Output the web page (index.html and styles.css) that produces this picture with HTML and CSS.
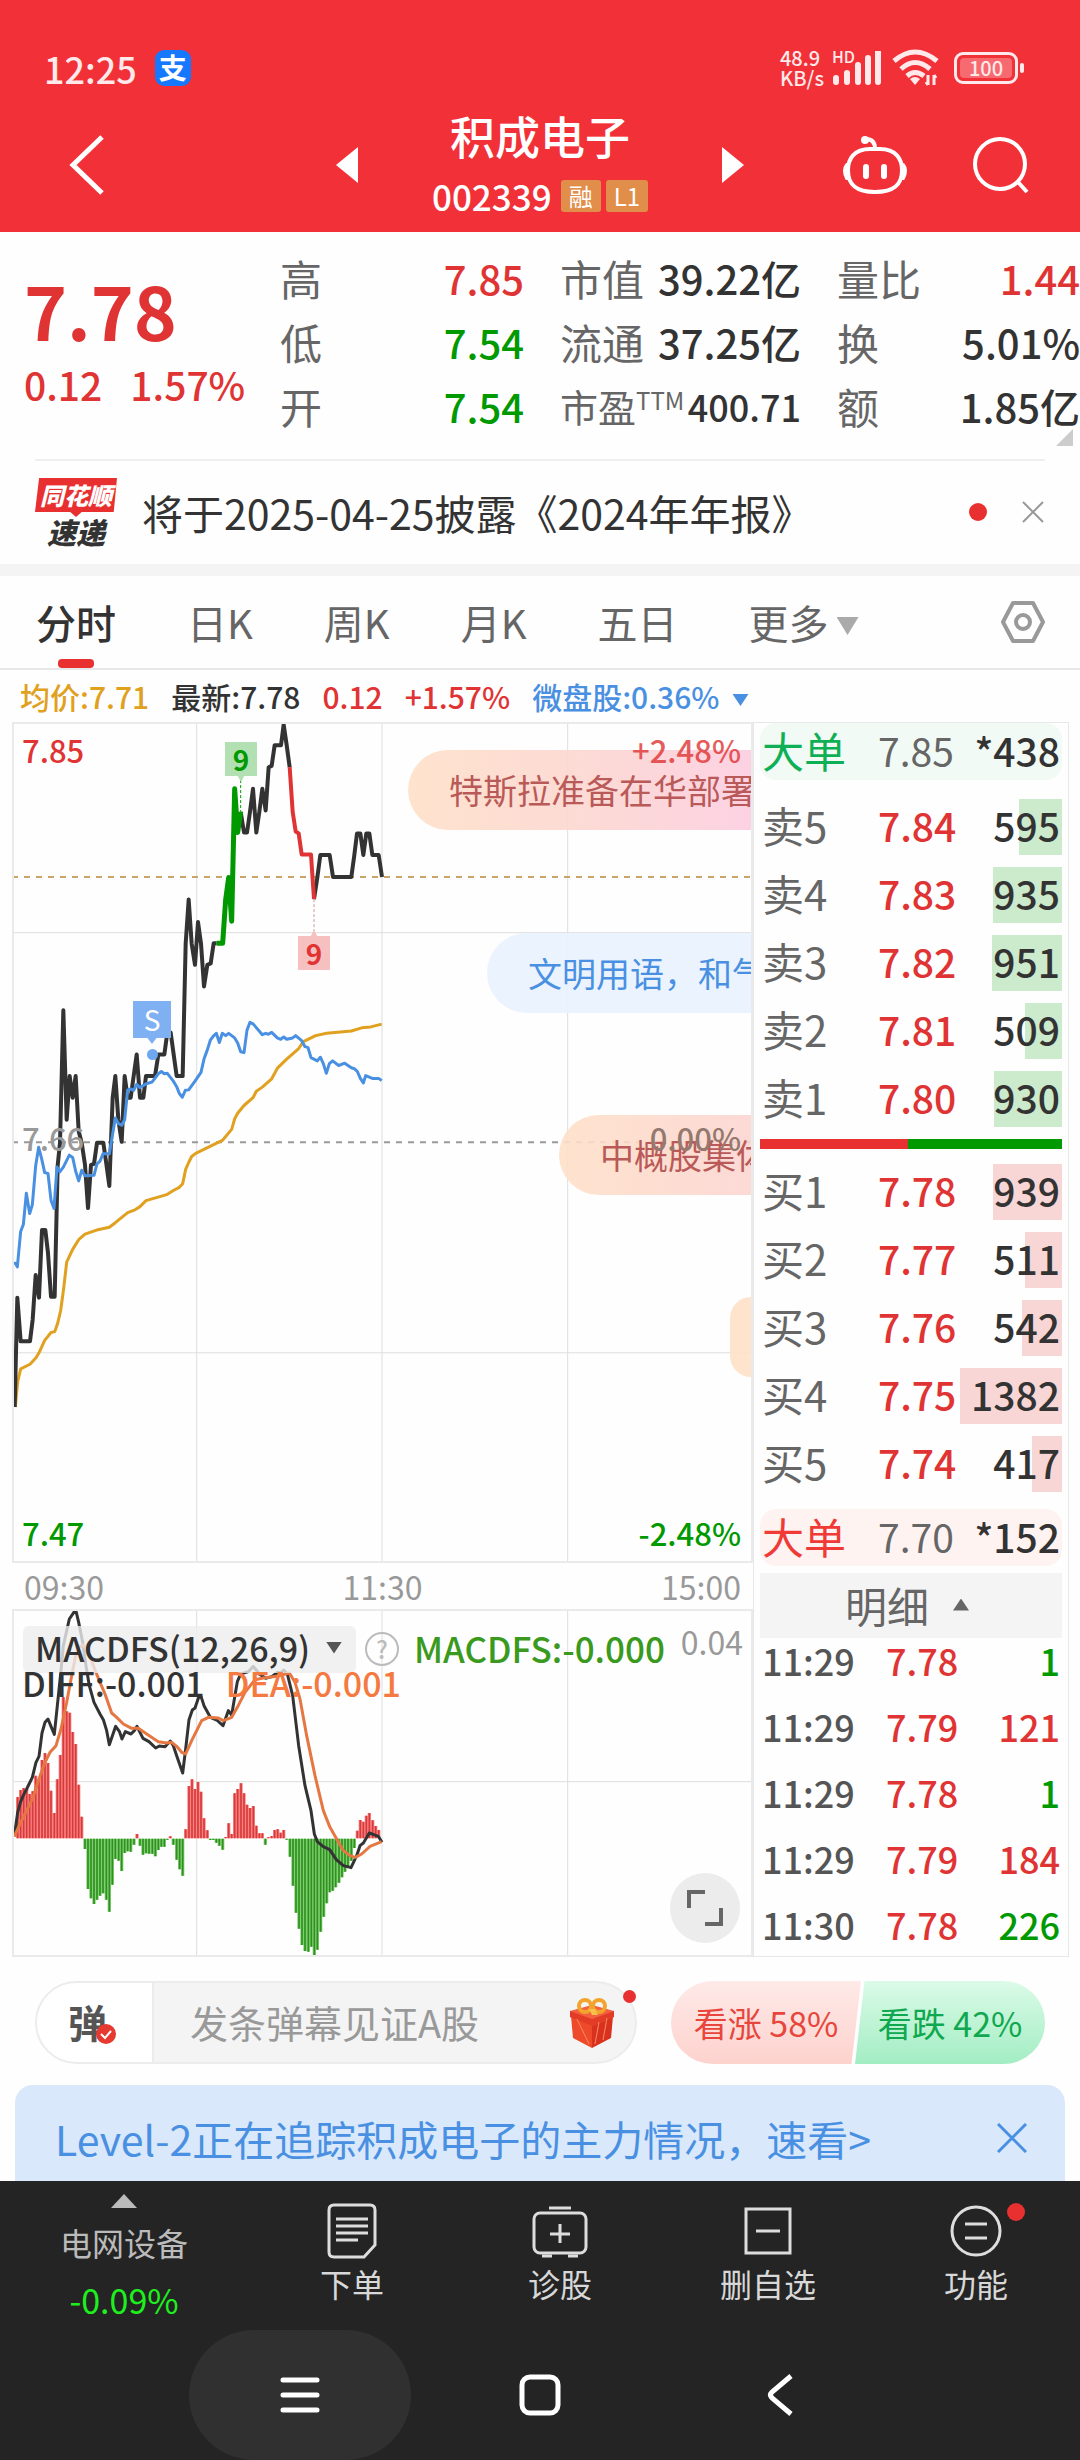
FILE: index.html
```html
<!DOCTYPE html>
<html lang="zh-CN">
<head>
<meta charset="utf-8">
<meta name="viewport" content="width=device-width">
<title>积成电子 002339</title>
<link rel="stylesheet" href="styles.css">
</head>
<body>
<header class="top">
  <div class="status">
    <span class="clock">12:25</span>
    <span class="pay">支</span>
    <span class="speed"><span>48.9</span><span>KB/s</span></span>
    <span class="signal">
      <span class="hd">HD</span>
      <svg viewBox="0 0 50 34" width="50" height="34" aria-hidden="true"><path d="M4 33v-4M15 33V24M26 33V16M36 33V9M46 33V3" stroke="#ffe9ea" stroke-width="6" stroke-linecap="round" transform="translate(0 -2)"/></svg>
    </span>
    <svg class="wifi" viewBox="0 0 48 38" width="48" height="38" aria-hidden="true"><g fill="none" stroke="#ffe9ea" stroke-width="5"><path d="M2 12Q23-6 45 12"/><path d="M9 20Q23 7 38 20"/><path d="M15 27Q23 20 32 27"/></g><path d="M18 30Q23 26 28 30L23 36Z" fill="#ffe9ea"/><path d="M36 26v10M34 33l2 3M42 36V26M44 29l-2-3" stroke="#ffe9ea" stroke-width="3" fill="none"/></svg>
    <span class="battery"><span class="cell">100</span></span>
  </div>
  <nav class="nav">
    <button class="icon-btn back" aria-label="返回"><svg viewBox="0 0 36 62" width="36" height="62"><path d="M33 3L4 31L33 59" fill="none" stroke="#fff" stroke-width="5"/></svg></button>
    <div class="stock">
      <button class="icon-btn" aria-label="上一只"><svg viewBox="0 0 22 36" width="22" height="36"><path d="M22 0V36L0 18Z" fill="#fff"/></svg></button>
      <div class="name">
        <h1>积成电子</h1>
        <p class="code"><span>002339</span><span class="tag">融</span><span class="tag">L1</span></p>
      </div>
      <button class="icon-btn" aria-label="下一只"><svg viewBox="0 0 22 36" width="22" height="36"><path d="M0 0V36L22 18Z" fill="#fff"/></svg></button>
    </div>
    <div class="actions">
      <button class="icon-btn" aria-label="问财助手"><svg viewBox="0 0 66 60" width="66" height="60"><g fill="none" stroke="#fff" stroke-width="4" stroke-linecap="round"><path d="M33 14H38C54 14 60 24 60 35C60 50 52 57 33 57C14 57 6 50 6 35C6 24 12 14 28 14H33C33 7 30 4 24 4"/><path d="M5 30Q1 35 5 43M61 30Q65 35 61 43"/><path d="M24 32v9M42 32v9" stroke-width="6"/></g><circle cx="23" cy="5" r="4" fill="#fff"/></svg></button>
      <button class="icon-btn" aria-label="搜索"><svg viewBox="0 0 58 58" width="58" height="58"><circle cx="28" cy="28" r="25" fill="none" stroke="#fff" stroke-width="4"/><path d="M45 45L55 56" stroke="#fff" stroke-width="4"/></svg></button>
    </div>
  </nav>
</header>

<main>
  <section class="quote">
    <div class="last red">
      <strong>7.78</strong>
      <p><span>0.12</span><span>1.57%</span></p>
    </div>
    <dl class="col c1">
      <div><dt>高</dt><dd class="red">7.85</dd></div>
      <div><dt>低</dt><dd class="green">7.54</dd></div>
      <div><dt>开</dt><dd class="green">7.54</dd></div>
    </dl>
    <dl class="col c2">
      <div><dt>市值</dt><dd>39.22亿</dd></div>
      <div><dt>流通</dt><dd>37.25亿</dd></div>
      <div><dt class="pe">市盈<sup>TTM</sup></dt><dd class="small">400.71</dd></div>
    </dl>
    <dl class="col c3">
      <div><dt>量比</dt><dd class="red">1.44</dd></div>
      <div><dt>换</dt><dd>5.01%</dd></div>
      <div><dt>额</dt><dd>1.85亿</dd></div>
    </dl>
    <span class="corner"></span>
  </section>

  <section class="news">
    <span class="brand"><span class="brand-box">同花顺</span><span class="brand-sub">速递</span></span>
    <a href="#news">将于2025-04-25披露《2024年年报》</a>
    <span class="dot"></span>
    <button class="icon-btn" aria-label="关闭"><svg viewBox="0 0 24 24" width="24" height="24"><path d="M2 2L22 22M22 2L2 22" stroke="#999" stroke-width="2"/></svg></button>
  </section>

  <nav class="tabs">
    <button class="on">分时</button>
    <button>日K</button>
    <button>周K</button>
    <button>月K</button>
    <button>五日</button>
    <button>更多<i class="tri-down"></i></button>
    <button class="set" aria-label="设置"><svg viewBox="0 0 46 44" width="46" height="44"><path d="M13 3H33L43 22L33 41H13L3 22Z" fill="none" stroke="#999" stroke-width="4" stroke-linejoin="round"/><circle cx="23" cy="22" r="7" fill="none" stroke="#999" stroke-width="4"/></svg></button>
  </nav>

  <div class="info">
    <span class="avg">均价:7.71</span>
    <span>最新:7.78</span>
    <span class="red">0.12</span>
    <span class="red">+1.57%</span>
    <span class="blue index">微盘股:0.36%<i class="tri-down"></i></span>
  </div>

  <div class="board">
    <div class="charts">
      <figure class="price">
        <svg class="plot" viewBox="42 9 2211 1821" preserveAspectRatio="none" aria-hidden="true">
          <g class="grid">
            <path d="M590 5V1834M1146 5V1834M1703 5V1834M36 463H2259M36 1377H2259"/>
          </g>
          <path class="dash gold" d="M36 342H2259"/>
          <path class="dash grey" d="M36 919H2259"/>
          <polyline class="line avg-line" points="46,1495 53,1440 62,1412 90,1402 108,1388 117,1377 134,1350 153,1333 164,1331 173,1313 182,1285 191,1237 200,1180 218,1152 236,1131 255,1119 290,1110 328,1104 346,1094 383,1072 405,1066 420,1059 438,1046 500,1033 520,1024 538,1017 548,1009 557,978 566,963 575,950 587,943 667,915 695,891 704,868 713,856 732,839 759,822 769,808 787,799 815,781 833,757 860,738 896,715 910,700 947,687 980,682 1054,677 1085,670 1112,668 1145,662"/>
          <polyline class="line last-line" points="44,1495 52,1257 62,1352 90,1352 98,1305 107,1208 117,1257 126,1110 136,1110 144,1160 153,1255 164,1255 173,970 180,920 190,632 200,870 209,775 218,822 227,775 236,895 245,920 255,968 264,1062 273,968 282,966 291,920 310,920 319,966 328,1014 338,822 346,775 355,870 365,918 374,775 383,822 392,822 401,775 410,728 420,822 430,822 438,775 465,775 475,728 493,728 502,680 512,680 521,728 530,775 548,775 557,487 566,391 575,487 585,533 594,440 603,487 612,580 622,533 632,530 641,486 650,486"/>
          <polyline class="line last-line" points="722,200 732,245 741,245 750,200 759,150 769,245 778,200 787,150 797,197 806,103 815,100 824,55 843,55 851,10 860,55 869,103"/>
          <polyline class="line last-line" points="942,390 952,343 961,294 989,294 999,342 1054,342 1063,294 1071,247 1081,247 1090,294 1099,247 1108,247 1117,294 1136,294 1146,342"/>
          <polyline class="line up-line" points="650,486 668,486 677,391 686,343 695,438 704,150 713,245 722,200"/>
          <polyline class="line down-line" points="869,103 878,200 887,243 896,247 905,293 933,293 942,390"/>
          <polyline class="line index-line" points="40,1182 46,1182 52,1190 62,1113 70,1098 79,1030 89,1074 97,1055 107,970 116,930 125,955 134,985 144,987 153,1045 162,1063 171,973 180,983 190,973 208,947 218,952 227,982 236,1003 245,980 255,992 282,991 291,966 300,960 309,944 328,944 337,905 346,866 355,878 365,882 374,870 383,805 392,803 401,806 410,793 420,800 438,792 456,788 475,770 484,765 493,770 502,769 520,786 530,798 538,813 547,821 556,806 566,805 585,786 603,767 612,738 622,718 631,697 640,688 649,682 658,702 667,682 677,687 686,682 704,692 713,703 722,722 732,724 741,675 750,658 760,662 787,685 797,682 805,684 815,680 832,692 842,695 851,690 860,695 878,692 887,687 905,698 915,711 924,713 933,735 952,742 961,734 970,748 979,769 988,748 998,742 1016,752 1034,747 1054,757 1063,759 1072,765 1081,780 1090,790 1097,774 1117,780 1136,780 1145,785"/>
          <path class="lead" stroke="#090" d="M722 131V200"/>
          <path class="lead" stroke="#c99" d="M942 390V460"/>
        </svg>
        <span class="mark sell">9</span>
        <span class="mark buy">9</span>
        <span class="mark s">S</span>
        <span class="barrage b1">特斯拉准备在华部署</span>
        <span class="barrage b2">文明用语，和气</span>
        <span class="barrage b3">中概股集体</span>
        <span class="barrage b4"></span>
        <span class="scale tl red">7.85</span>
        <span class="scale tr red">+2.48%</span>
        <span class="scale ml">7.66</span>
        <span class="scale mr">0.00%</span>
        <span class="scale bl green">7.47</span>
        <span class="scale br green">-2.48%</span>
      </figure>
      <div class="times"><span>09:30</span><span>11:30</span><span>15:00</span></div>
      <figure class="macd">
        <svg class="plot" viewBox="42 156 2211 1032" preserveAspectRatio="none" aria-hidden="true">
          <path class="grid" d="M590 150V1189M1146 150V1189M1703 150V1189M36 668H2259"/>
          <defs>
            <path id="up" d="M53 838V714M62 838V693M71 838V687M80 838V690M89 838V705M98 838V697M107 838V650M117 838V661M126 838V603M135 838V582M144 838V612M153 838V695M163 838V762M172 838V661M181 838V588M190 838V414M200 838V457M209 838V461M218 838V519M227 838V555M236 838V677M245 838V773M411 838V825M511 838V832M557 838V811M567 838V681M576 838V661M585 838V690M594 838V669M603 838V698M612 838V778M622 838V814M677 838V834M686 838V793M695 838V825M704 838V703M713 838V690M723 838V673M732 838V703M741 838V737M750 838V747M760 838V741M769 838V800M778 838V823M787 838V823M805 838V835M815 838V831M824 838V813M833 838V811M842 838V821M851 838V813M1072 838V815M1081 838V783M1090 838V788M1099 838V770M1108 838V762M1118 838V784M1127 838V801M1136 838V813"/>
            <path id="down" d="M255 839V870M264 839V990M273 839V1018M282 839V1035M291 839V1022M300 839V1010M309 839V1003M319 839V1022M328 839V1058M337 839V977M346 839V900M356 839V905M365 839V936M374 839V882M383 839V877M392 839V878M402 839V857M420 839V860M429 839V887M438 839V883M447 839V884M457 839V884M466 839V892M475 839V873M484 839V863M493 839V863M502 839V842M520 839V857M530 839V902M539 839V931M548 839V950M631 839V843M640 839V843M649 839V851M658 839V860M668 839V872M796 839V857M860 839V842M870 839V893M879 839V980M888 839V1061M897 839V1109M906 839V1158M915 839V1176M925 839V1178M934 839V1163M943 839V1188M952 839V1172M962 839V1118M971 839V1073M980 839V1033M989 839V1000M998 839V995M1007 839V985M1017 839V971M1026 839V955M1035 839V938M1044 839V925M1054 839V905M1063 839V867"/>
          </defs>
          <use href="#up" stroke="#ff8080" stroke-width="10"/><use href="#up" stroke="#d23c3c" stroke-width="5"/>
          <use href="#down" stroke="#7fd06f" stroke-width="10"/><use href="#down" stroke="#2f8f20" stroke-width="5"/>
          <polyline class="line thin" stroke="#333" points="43,832 53,760 62,728 71,707 80,690 97,655 108,610 117,592 126,522 135,490 144,480 153,502 163,526 173,430 182,345 190,260 208,180 227,152 236,190 248,250 258,320 268,380 282,430 300,465 310,482 320,515 328,557 347,502 358,517 366,540 376,518 393,525 403,515 411,502 429,538 447,548 467,567 478,561 495,563 511,546 520,560 530,590 548,642 557,570 567,482 577,453 585,447 596,415 604,415 612,440 631,475 650,483 669,500 685,455 695,468 704,415 712,368 722,345 745,338 760,322 778,345 797,358 815,353 833,340 843,342 851,333 862,345 878,410 896,560 915,680 933,755 943,825 952,848 970,863 989,872 1009,902 1030,920 1053,926 1070,890 1080,860 1090,852 1108,822 1135,832 1146,850"/>
          <polyline class="line thin" stroke="#e57742" points="43,832 60,795 80,755 98,718 117,660 134,612 150,580 168,560 183,510 200,430 215,350 227,290 237,265 250,258 265,280 280,320 300,370 315,405 335,462 350,475 370,495 395,508 415,508 440,525 475,548 500,552 515,550 530,562 545,580 557,585 575,545 605,485 625,475 655,477 670,485 695,475 712,445 735,400 765,362 790,357 830,352 868,342 885,370 900,420 920,530 945,650 970,755 990,805 1010,840 1030,875 1050,890 1066,895 1085,885 1110,862 1145,848"/>
        </svg>
        <div class="legend">
          <button class="pick">MACDFS(12,26,9)<i class="tri-down"></i></button>
          <button class="help" aria-label="指标说明">?</button>
          <span class="macd-val">MACDFS:-0.000</span>
          <span class="max">0.04</span>
        </div>
        <div class="legend second"><span>DIFF:-0.001</span><span class="dea">DEA:-0.001</span></div>
        <button class="expand" aria-label="全屏"><svg viewBox="0 0 36 36" width="36" height="36"><path d="M2 18V2H18M34 18V34H18" fill="none" stroke="#666" stroke-width="4"/></svg></button>
      </figure>
    </div>

    <aside class="book">
      <table class="big up">
        <tr><th>大单</th><td>7.85</td><td class="vol">*438</td></tr>
      </table>
      <table class="levels asks">
        <tr><th>卖5</th><td class="red">7.84</td><td class="vol"><i style="width:43px"></i><b>595</b></td></tr>
        <tr><th>卖4</th><td class="red">7.83</td><td class="vol"><i style="width:69px"></i><b>935</b></td></tr>
        <tr><th>卖3</th><td class="red">7.82</td><td class="vol"><i style="width:70px"></i><b>951</b></td></tr>
        <tr><th>卖2</th><td class="red">7.81</td><td class="vol"><i style="width:37px"></i><b>509</b></td></tr>
        <tr><th>卖1</th><td class="red">7.80</td><td class="vol"><i style="width:68px"></i><b>930</b></td></tr>
      </table>
      <div class="ratio"><span style="width:49%"></span></div>
      <table class="levels bids">
        <tr><th>买1</th><td class="red">7.78</td><td class="vol"><i style="width:69px"></i><b>939</b></td></tr>
        <tr><th>买2</th><td class="red">7.77</td><td class="vol"><i style="width:37px"></i><b>511</b></td></tr>
        <tr><th>买3</th><td class="red">7.76</td><td class="vol"><i style="width:40px"></i><b>542</b></td></tr>
        <tr><th>买4</th><td class="red">7.75</td><td class="vol"><i style="width:102px"></i><b>1382</b></td></tr>
        <tr><th>买5</th><td class="red">7.74</td><td class="vol"><i style="width:30px"></i><b>417</b></td></tr>
      </table>
      <table class="big down">
        <tr><th>大单</th><td>7.70</td><td class="vol">*152</td></tr>
      </table>
      <button class="detail">明细<i class="tri-up"></i></button>
      <table class="trades">
        <tr><th>11:29</th><td class="red">7.78</td><td class="vol green">1</td></tr>
        <tr><th>11:29</th><td class="red">7.79</td><td class="vol red">121</td></tr>
        <tr><th>11:29</th><td class="red">7.78</td><td class="vol green">1</td></tr>
        <tr><th>11:29</th><td class="red">7.79</td><td class="vol red">184</td></tr>
        <tr><th>11:30</th><td class="red">7.78</td><td class="vol green">226</td></tr>
      </table>
    </aside>
  </div>

  <section class="social">
    <div class="comment">
      <button class="dan" aria-label="弹幕开关">弹<svg viewBox="0 0 22 22" width="22" height="22"><circle cx="11" cy="11" r="10" fill="#e6392f"/><path d="M6 11l4 4 6-7" fill="none" stroke="#fff" stroke-width="2"/></svg></button>
      <input type="text" aria-label="发弹幕" placeholder="发条弹幕见证A股">
      <svg class="gift" viewBox="0 0 46 50" width="46" height="50" aria-hidden="true"><path d="M2 18L23 26V50L4 40Z" fill="#ee4a2a"/><path d="M44 18L23 26V50L42 40Z" fill="#d8321f"/><path d="M1 13L23 7L45 13V19L23 28L1 19Z" fill="#f4603f"/><path d="M1 13L23 21L45 13V19L23 28L1 19Z" fill="#e23c26"/><path d="M8 21L20 46M30 24L26 46M38 20L34 42" stroke="#f98a5c" stroke-width="1"/><g fill="none" stroke="#f2a42c" stroke-width="4"><ellipse cx="16" cy="8" rx="6" ry="6"/><ellipse cx="30" cy="8" rx="6" ry="6"/></g><path d="M20 11h6l3 6h-6z" fill="#f7c04a"/></svg>
      <span class="dot small-dot"></span>
    </div>
    <div class="votes">
      <button class="bull">看涨 58%</button>
      <button class="bear">看跌 42%</button>
    </div>
  </section>

  <section class="banner">
    <a href="#level2">Level-2正在追踪积成电子的主力情况，速看&gt;</a>
    <button class="icon-btn" aria-label="关闭"><svg viewBox="0 0 30 30" width="30" height="30"><path d="M1 1L29 29M29 1L1 29" stroke="#4a90e2" stroke-width="3"/></svg></button>
  </section>
</main>

<footer class="bottom">
  <nav class="menu">
    <a class="sector" href="#sector"><i class="tri-up"></i><span>电网设备</span><span class="chg">-0.09%</span></a>
    <a href="#trade"><svg viewBox="0 0 56 56" width="56" height="56"><g fill="none" stroke="#ddd" stroke-width="3"><path d="M10 2H46Q51 2 51 7V42L40 54H10Q5 54 5 49V7Q5 2 10 2Z"/><path d="M12 16H44M12 23H44M12 30H44M12 37H34"/></g></svg><span>下单</span></a>
    <a href="#diagnose"><svg viewBox="0 0 56 56" width="56" height="56"><g fill="none" stroke="#ddd" stroke-width="3"><rect x="2" y="10" width="52" height="40" rx="6"/><path d="M17 5H39M28 21V40M18 31H38M10 53H20M36 53H46"/></g></svg><span>诊股</span></a>
    <a href="#remove"><svg viewBox="0 0 56 56" width="56" height="56"><g fill="none" stroke="#ddd" stroke-width="3"><rect x="6" y="6" width="44" height="44"/><path d="M16 28H40"/></g></svg><span>删自选</span></a>
    <a class="more" href="#tools"><svg viewBox="0 0 56 56" width="56" height="56"><g fill="none" stroke="#ddd" stroke-width="3"><circle cx="28" cy="28" r="24"/><path d="M17 21H39M17 35H39"/></g></svg><span>功能</span><b class="dot"></b></a>
  </nav>
  <div class="system">
    <button class="pressed" aria-label="最近任务"><svg viewBox="0 0 40 40" width="40" height="40"><path d="M3 5H37M3 20H37M3 35H37" stroke="#fff" stroke-width="5" stroke-linecap="round"/></svg></button>
    <button aria-label="主页"><svg viewBox="0 0 44 44" width="44" height="44"><rect x="4" y="4" width="36" height="36" rx="8" fill="none" stroke="#fff" stroke-width="5"/></svg></button>
    <button aria-label="返回"><svg viewBox="0 0 28 44" width="28" height="44"><path d="M25 3L6 19Q3 22 6 25L25 41" fill="none" stroke="#fff" stroke-width="5"/></svg></button>
  </div>
</footer>
</body>
</html>
```
FILE: styles.css
```css
* { box-sizing: border-box; }
body {
  margin: 0;
  background: #fefefe;
  color: #333;
  font-family: "Noto Sans CJK SC", "Noto Sans", sans-serif;
  font-size: 40px;
  line-height: 48px;
}
h1, p, dl, dd, figure { margin: 0; }
a { color: inherit; text-decoration: none; }
button { font: inherit; color: inherit; background: none; border: 0; padding: 0; }
svg { display: block; }
i, b { font-style: normal; font-weight: inherit; }
table { border-collapse: collapse; table-layout: fixed; width: 100%; }
th, td { padding: 0; font-weight: 400; text-align: left; }
.icon-btn { display: flex; }
.red { color: #e03434; }
.green { color: #090; }
.blue { color: #4a90e2; }
.dot { width: 18px; height: 18px; border-radius: 50%; background: #e93030; }
.tri-down, .tri-up { display: inline-block; width: 16px; height: 12px; background: currentColor; }
.tri-down { clip-path: polygon(0 0, 100% 0, 50% 100%); }
.tri-up { clip-path: polygon(50% 0, 100% 100%, 0 100%); }

/* header */
.top { background: #f23037; color: #fff; }
.status { display: flex; align-items: center; height: 100px; padding: 36px 56px 0 44px; color: #ffe9ea; }
.clock { font-size: 36px; font-weight: 500; }
.pay { width: 36px; height: 36px; margin: 0 auto 0 18px; border-radius: 9px; background: #1677ff; color: #fff; font-size: 28px; font-weight: 700; line-height: 34px; text-align: center; }
.speed { display: grid; font-size: 20px; line-height: 20px; font-weight: 500; margin-right: 8px; }
.signal { position: relative; }
.hd { position: absolute; left: 0; top: -3px; font-size: 16px; line-height: 16px; font-weight: 500; }
.wifi { margin: 0 14px 0 10px; }
.battery { position: relative; width: 64px; height: 32px; padding: 3px; border: 3px solid #ffe9ea; border-radius: 9px; margin-right: 6px; }
.battery::after { content: ""; position: absolute; right: -9px; top: 8px; width: 4px; height: 10px; border-radius: 2px; background: #ffe9ea; }
.cell { display: block; height: 20px; border-radius: 4px; background: #f76a70; font-size: 20px; line-height: 20px; font-weight: 500; text-align: center; }
.nav { display: grid; grid-template-columns: 1fr 408px 1fr; align-items: center; height: 132px; padding-bottom: 2px; }
.back { padding-left: 69px; }
.stock { display: flex; justify-content: space-between; align-items: center; }
.name { display: grid; justify-items: center; gap: 8px; padding-bottom: 2px; }
h1 { font-size: 45px; font-weight: 500; line-height: 56px; }
.code { display: flex; align-items: center; gap: 5px; font-size: 35px; line-height: 48px; font-weight: 500; }
.tag { height: 32px; padding: 0 8px; border-radius: 3px; background: #e28e4b; font-size: 24px; line-height: 31px; font-weight: 400; }
.tag:nth-child(2) { margin-left: 4px; }
.actions { display: flex; justify-content: flex-end; align-items: center; gap: 64px; padding-right: 50px; }

/* quote */
.quote { position: relative; display: grid; grid-template-columns: 280px 244px 277px 279px; padding-top: 14px; height: 227px; }
.last { padding-left: 24px; }
.last strong { display: block; margin-top: 18px; font-size: 73px; line-height: 90px; font-weight: 700; }
.last p { display: flex; gap: 28px; margin-top: 6px; font-size: 39px; font-weight: 500; }
.col { display: grid; grid-auto-rows: 64px; }
.col div { display: flex; justify-content: space-between; align-items: center; }
.c2, .c3 { padding-left: 36px; }
dt { font-size: 42px; color: #666; white-space: nowrap; }
dd { font-weight: 500; }
dt.pe { font-size: 38px; }
.pe sup { font-size: 24px; line-height: 0; vertical-align: 12px; }
.small { font-size: 36px; }
.corner { position: absolute; right: 7px; bottom: 13px; width: 17px; height: 17px; background: #ccc; clip-path: polygon(100% 0, 100% 100%, 0 100%); }

/* news */
.news { position: relative; display: flex; align-items: center; height: 117px; padding: 0 35px; border-bottom: 12px solid #f4f4f4; }
.news::before { content: ""; position: absolute; left: 35px; right: 35px; top: 0; height: 2px; background: #eee; }
.news a { flex: 1; margin-left: 25px; font-size: 41px; }
.news .icon-btn { margin-left: 34px; }
.brand { display: grid; width: 82px; justify-items: center; font-weight: 900; font-style: italic; }
.brand-box { width: 82px; height: 39px; padding-bottom: 5px; background: #e93030; color: #fff; font-size: 24px; line-height: 34px; text-align: center; clip-path: polygon(5% 0, 100% 0, 96% 87%, 57% 87%, 50% 100%, 43% 87%, 0 87%); }
.brand-sub { font-size: 29px; line-height: 28px; }

/* tabs */
.tabs { display: flex; align-items: center; gap: 71px; height: 94px; padding: 0 34px 0 36px; border-bottom: 2px solid #e8e8e8; color: #666; }
.tabs button { position: relative; white-space: nowrap; }
.tabs .on { color: #333; font-weight: 500; }
.tabs .on::after { content: ""; position: absolute; left: 22px; bottom: -22px; width: 36px; height: 9px; border-radius: 4px; background: #e93030; }
.tabs .tri-down { width: 22px; height: 18px; margin-left: 8px; vertical-align: 4px; color: #aaa; }
.tabs .set { margin-left: auto; }
.info { display: flex; align-items: center; gap: 22px; height: 52px; padding: 0 20px; font-size: 30px; font-weight: 500; }
.avg { color: #e0a020; }
.index .tri-down { margin-left: 13px; vertical-align: 3px; }

/* charts */
.board { display: grid; grid-template-columns: 741fr 316fr; padding: 0 11px 0 12px; }
.price { position: relative; height: 841px; border: 2px solid #eaeaea; overflow: hidden; }
.plot { width: 100%; height: 100%; }
.plot * { vector-effect: non-scaling-stroke; }
.plot use, .plot defs path { vector-effect: none; }
.grid { fill: none; stroke: #dedede; stroke-width: 1; }
.dash { stroke-width: 2; stroke-dasharray: 6 6; }
.gold { stroke: #c8a468; }
.grey { stroke: #999; }
.line { fill: none; stroke-width: 3; stroke-linejoin: round; }
.last-line { stroke: #333; stroke-width: 4; }
.up-line { stroke: #090; stroke-width: 5; }
.down-line { stroke: #e03434; stroke-width: 4; }
.avg-line { stroke: #e0a020; }
.index-line { stroke: #4a90e2; }
.lead { stroke-dasharray: 3 2; }
.scale { position: absolute; font-size: 31px; line-height: 32px; font-weight: 500; }
.tl { left: 8px; top: 10px; }
.tr { right: 10px; top: 10px; opacity: .8; }
.bl { left: 8px; bottom: 12px; }
.br { right: 10px; bottom: 12px; }
.ml { left: 8px; top: 398px; color: #999; }
.mr { right: 10px; top: 398px; color: #95796e; }
.mark { position: absolute; width: 32px; height: 40px; font-size: 28px; line-height: 34px; font-weight: 700; text-align: center; }
.sell { left: 211px; top: 18px; background: #b2e0b2; color: #090; clip-path: polygon(0 0, 100% 0, 100% 85%, 60% 85%, 50% 100%, 40% 85%, 0 85%); }
.buy { left: 284px; top: 206px; padding-top: 6px; background: #f7c0c0; color: #e03434; clip-path: polygon(0 15%, 40% 15%, 50% 0, 60% 15%, 100% 15%, 100% 100%, 0 100%); }
.s { z-index: 1; left: 119px; top: 277px; width: 38px; height: 43px; color: #fff; font-weight: 400; line-height: 36px; }
.s::before { content: ""; position: absolute; z-index: -1; inset: 0; background: #7eb0f2; clip-path: polygon(0 0, 100% 0, 100% 86%, 62% 86%, 50% 100%, 38% 86%, 0 86%); }
.s::after { content: ""; position: absolute; left: 14px; top: 48px; width: 11px; height: 11px; border-radius: 50%; background: #6ea8f0; }
.barrage { position: absolute; right: 0; height: 80px; padding-left: 41px; border-radius: 40px 0 0 40px; font-size: 34px; line-height: 80px; white-space: nowrap; overflow: hidden; color: #ba5a58; background: linear-gradient(90deg, #fee0c8e6, #fcd5d2e6 200px, #fccde0e6 345px); }
.b1 { left: 394px; top: 26px; }
.b2 { left: 473px; top: 209px; background: #e9f2fee6; color: #4a90e2; }
.b3 { left: 545px; top: 391px; }
.b4 { left: 716px; top: 573px; padding: 0; background: #fee0c8e6; }
.times { display: grid; grid-template-columns: 1fr 1fr 1fr; height: 46px; padding: 0 12px; font-size: 32px; line-height: 47px; color: #999; }
.times span:nth-child(2) { text-align: center; }
.times span:nth-child(3) { text-align: right; }
.macd { position: relative; height: 348px; border: 2px solid #eaeaea; }
.legend { position: absolute; left: 9px; right: 8px; top: 8px; display: flex; align-items: center; font-size: 34px; line-height: 44px; font-weight: 500; white-space: nowrap; }
.pick { display: flex; align-items: center; height: 47px; padding: 0 14px 3px 12px; border-radius: 6px; background: #eeeeeecc; color: #333; width: 333px; justify-content: space-between; font-weight: 500; }
.pick .tri-down { color: #555; }
.help { width: 34px; height: 34px; margin: 0 15px 0 9px; border: 2px solid #bbb; border-radius: 50%; color: #bbb; font-size: 24px; line-height: 28px; }
.macd-val { padding-bottom: 3px; font-size: 35px; color: #3a9a20; }
.max { margin-left: auto; padding-bottom: 16px; font-size: 32px; font-weight: 400; color: #999; }
.second { top: 50px; left: 8px; gap: 21px; }
.dea { color: #f57a42; }
.expand { position: absolute; right: 11px; bottom: 12px; width: 70px; height: 70px; padding: 17px; border-radius: 50%; background: #ececec; }

/* order book */
.book { padding: 0 6px; border: 1px solid #e8e8e8; }
.book th { width: 118px; padding: 0 0 4px 2px; font-size: 42px; color: #666; }
.book td { padding-bottom: 4px; font-size: 39px; font-weight: 500; }
.book .vol { position: relative; width: 105px; padding-right: 2px; text-align: right; }
.big { height: 57px; border-radius: 16px; }
.big.up { background: #f1faf5; }
.big.down { margin-top: 11px; background: #fff3f2; }
.big td, .big th { height: 57px; }
.book .big td:nth-child(2) { font-weight: 400; color: #666; }
.book .big th { color: #0fb055; }
.book .big.down th { color: #f03a36; }
.levels { margin-top: 13px; }
.levels tr { height: 68px; }
.levels .vol i { position: absolute; right: 0; top: 6px; height: 56px; background: #cceacc; }
.bids .vol i { background: #f9d6d6; }
.levels .vol b { position: relative; }
.levels.bids { margin-top: 9px; }
.ratio { height: 10px; margin-top: 6px; background: #090; }
.ratio span { display: block; height: 100%; background: #e93030; }
.detail { display: flex; width: 100%; height: 65px; margin-top: 7px; padding: 0 8px 2px 0; align-items: center; justify-content: center; gap: 24px; background: #f4f4f4; color: #666; font-size: 42px; }
.trades { line-height: 44px; }
.book .trades th { width: 126px; font-size: 36px; font-weight: 500; color: #555; }
.book .trades td { font-size: 36px; }
.book .trades th, .book .trades td { height: 66px; padding-bottom: 22px; }
.book .trades tr:last-child > * { height: 48px; padding-bottom: 4px; }

/* comments and votes */
.social { display: flex; justify-content: space-between; gap: 34px; padding: 24px 35px 21px; }
.comment { position: relative; display: flex; flex: 1; min-width: 0; height: 83px; border: 2px solid #ececec; border-radius: 42px; background: #f4f4f4; }
.dan { position: relative; flex: none; width: 117px; border-right: 2px solid #ececec; border-radius: 40px 0 0 40px; background: #fff; font-size: 39px; font-weight: 700; color: #555; padding: 0 14px 4px 0; }
.dan svg { position: absolute; left: 58px; top: 40px; }
.comment input { flex: 1; min-width: 0; padding: 0 0 2px 36px; border: 0; background: none; font: inherit; font-size: 38px; }
.comment input::placeholder { color: #999; opacity: 1; }
.gift { flex: none; align-self: center; margin-right: 20px; }
.small-dot { position: absolute; right: -1px; top: 7px; width: 13px; height: 13px; }
.votes { display: flex; flex: none; width: 374px; height: 83px; font-size: 34px; border-radius: 42px; overflow: hidden; }
.votes button { flex: 1; white-space: nowrap; }
.bull { background: linear-gradient(#feeae8, #fdd2cd); color: #e8453c; clip-path: polygon(0 0, 100% 0, 95% 100%, 0 100%); }
.bear { margin-left: -6px; background: linear-gradient(#dbfbe8, #a3edc3); color: #0fa850; clip-path: polygon(5% 0, 100% 0, 100% 100%, 0 100%); }

/* promotion */
.banner { display: flex; align-items: center; justify-content: space-between; height: 96px; margin: 0 15px; padding: 10px 38px 0 40px; border-radius: 18px 18px 0 0; background: #d9e8fb; color: #4a90e2; font-size: 41px; white-space: nowrap; }

/* bottom bars */
.bottom { background: #242424; color: #d8d8d8; }
.menu { display: grid; grid-template-columns: 248fr 208fr 208fr 208fr 208fr; height: 149px; font-size: 32px; }
.menu a { position: relative; display: flex; flex-direction: column; align-items: center; padding-top: 22px; }
.menu .sector { padding-top: 13px; color: #bbb; }
.sector .tri-up { width: 26px; height: 14px; }
.sector span { margin-top: 10px; }
.menu .chg { color: #1ef01e; font-size: 34px; }
.more .dot { position: absolute; left: 135px; top: 22px; }
.system { display: grid; grid-template-columns: 240px 240px 240px; justify-content: center; height: 130px; }
.system button { display: flex; align-items: center; justify-content: center; margin: 0 9px; border-radius: 66px; }
.pressed { background: #303030; }
```
